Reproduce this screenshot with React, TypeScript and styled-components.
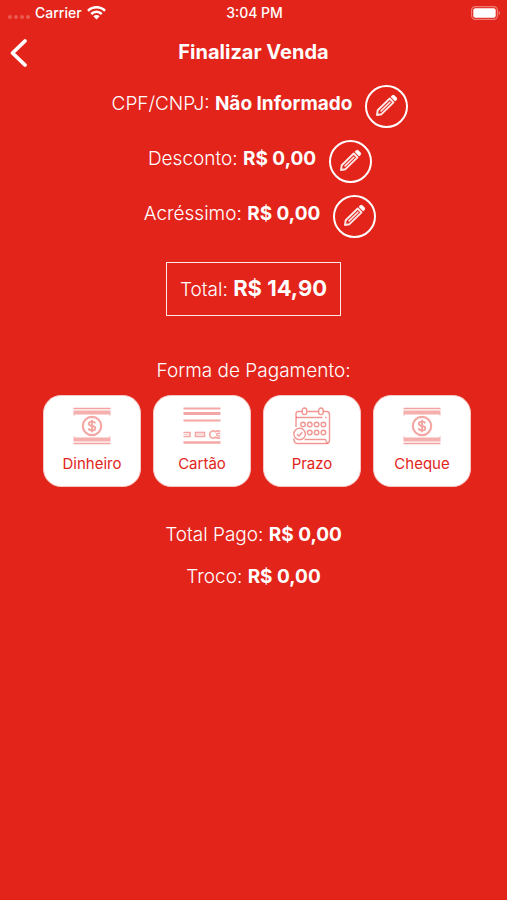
import React from "react";
import styled, { createGlobalStyle } from "styled-components";

const RED = "#e3241b";

const GlobalStyle = createGlobalStyle`
  *, *::before, *::after { box-sizing: border-box; }
  html, body { margin: 0; background: ${RED}; }
  body { color: #fff; font-family: Inter, "Liberation Sans", sans-serif; }
  button { font: inherit; color: inherit; cursor: pointer; }
`;

const Screen = styled.div`
  display: flex;
  flex-direction: column;
  min-height: 100vh;
  background: ${RED};
`;

const StatusBar = styled.div`
  display: grid;
  grid-template-columns: 1fr auto 1fr;
  align-items: center;
  height: 26px;
  padding: 0 6px 0 8px;
  font-size: 14px;
  line-height: 16px;
  font-weight: 500;
`;

const StatusLeft = styled.div`
  display: flex;
  align-items: center;
  gap: 5px;
`;

const StatusRight = styled.div`
  display: flex;
  justify-content: flex-end;
`;

const SignalDots = styled.div`
  display: flex;
  gap: 2px;
  padding-top: 8px;
`;

const Dot = styled.span`
  width: 4px;
  height: 4px;
  border-radius: 50%;
  background: rgba(255, 255, 255, 0.25);
`;

const Header = styled.header`
  display: grid;
  grid-template-columns: 40px 1fr 40px;
  align-items: center;
  height: 52px;
`;

const BackButton = styled.button`
  display: flex;
  padding: 2px 8px 0;
  border: 0;
  background: none;
`;

const Title = styled.h1`
  margin: 0;
  font-size: 20px;
  line-height: 24px;
  font-weight: 700;
  text-align: center;
`;

const Content = styled.main`
  display: flex;
  flex-direction: column;
  align-items: center;
  padding-top: 7px;
`;

const Fields = styled.div`
  display: flex;
  flex-direction: column;
  align-items: center;
  gap: 12px;
  padding-left: 13px;
`;

const Field = styled.div`
  display: flex;
  align-items: flex-start;
  gap: 13px;
`;

const Line = styled.p<{ $tall?: boolean }>`
  margin: 0;
  font-size: 19px;
  line-height: ${(p) => (p.$tall ? "38px" : "24px")};
  font-weight: 300;
  white-space: nowrap;

  strong { font-weight: 700; }
`;

const EditButton = styled.button`
  display: flex;
  align-items: center;
  justify-content: center;
  width: 43px;
  height: 43px;
  padding: 0 0 2px;
  border: 2px solid #fff;
  border-radius: 50%;
  background: none;
`;

const TotalBox = styled.div`
  margin-top: 24px;
  padding: 11px 13px;
  border: 1px solid rgba(255, 255, 255, 0.9);
  font-size: 19px;
  line-height: 28px;
  font-weight: 300;

  strong { font-size: 22px; font-weight: 700; }
`;

const SectionTitle = styled.h2`
  margin: 43px 0 12px;
  font-size: 19px;
  line-height: 24px;
  font-weight: 300;
`;

const Methods = styled.div`
  display: flex;
  flex-wrap: wrap;
  justify-content: center;
  gap: 12px;
  padding-left: 7px;
`;

const MethodButton = styled.button`
  display: flex;
  flex-direction: column;
  align-items: center;
  gap: 9px;
  width: 98px;
  height: 92px;
  padding: 11px 0 0;
  border: 1px solid #f6c8c5;
  border-radius: 18px;
  background: #fff;
  color: ${RED};
  font-size: 15px;
  line-height: 20px;
`;

const Summary = styled.div`
  display: flex;
  flex-direction: column;
  align-items: center;
  gap: 18px;
  margin-top: 36px;
`;

const WifiIcon = () => (
  <svg width="19" height="14" viewBox="0 0 19 14" fill="none" stroke="#fff" strokeWidth="2.5" aria-hidden="true">
    <path d="M1 4.8C5.6 0 13.4 0 18 4.8" />
    <path d="M4.2 8C7.2 5 11.8 5 14.8 8" />
    <path d="M6.4 10.3C8 8.7 11 8.7 12.6 10.3L9.5 13.5Z" fill="#fff" stroke="none" />
  </svg>
);

const BatteryIcon = () => (
  <svg width="30" height="14" viewBox="0 0 30 14" aria-hidden="true">
    <rect x="0.6" y="0.6" width="25.8" height="12.8" rx="3.6" fill="none" stroke="#fff" strokeOpacity="0.4" strokeWidth="1.2" />
    <rect x="2.3" y="2.3" width="22.4" height="9.4" rx="2" fill="#fff" />
    <path d="M27.7 4.8C29.6 5.6 29.6 8.4 27.7 9.2Z" fill="#fff" fillOpacity="0.4" />
  </svg>
);

const BackIcon = () => (
  <svg width="20" height="30" viewBox="0 0 20 30" fill="none" stroke="#fff" strokeWidth="3.8" strokeLinecap="round" strokeLinejoin="round" aria-hidden="true">
    <path d="M17 3L4.5 15L17 27" />
  </svg>
);

const PencilIcon = () => (
  <svg width="23" height="23" viewBox="0 0 23 23" fill="none" stroke="#fff" strokeOpacity="0.9" strokeLinejoin="round" aria-hidden="true">
    <path d="M2 21L2.7 16.3L14.7 4.5L18.5 8.3L6.5 20.2Z" strokeWidth="1.9" />
    <path d="M5.6 17.4L15.4 7.7" strokeWidth="1.5" />
    <path d="M16.5 2.8L17.6 1.8Q18.4 1.2 19.2 2L21.2 4Q21.8 4.8 21.2 5.6L20.2 6.5Z" fill="#fff" strokeWidth="1.4" />
  </svg>
);

const artProps = {
  width: 38,
  height: 38,
  viewBox: "0 0 38 38",
  fill: "none",
  stroke: RED,
  "aria-hidden": true,
} as const;

const CashIcon = () => (
  <svg {...artProps}>
    <path d="M0.5 1.5H37.5M0.5 36.5H37.5" strokeWidth="1.7" strokeOpacity="0.42" />
    <path d="M0.5 5.5H37.5M0.5 32.5H37.5" strokeWidth="3.8" strokeOpacity="0.36" />
    <path d="M1 7.4V8.6M37 7.4V8.6M1 29.4V30.6M37 29.4V30.6" strokeOpacity="0.36" />
    <circle cx="19" cy="19" r="9.2" strokeWidth="2.2" strokeOpacity="0.4" />
    <path d="M22.3 16.4Q21.6 14.6 19 14.6Q15.8 14.6 15.8 16.8Q15.8 18.5 19 19Q22.4 19.5 22.4 21.3Q22.4 23.5 19 23.5Q16.2 23.5 15.5 21.4M19 12.8V25.2" strokeWidth="1.8" strokeOpacity="0.42" />
  </svg>
);

const CardIcon = () => (
  <svg {...artProps}>
    <g strokeOpacity="0.4">
      <path d="M0.5 1.5H37.5M0.5 13.5H37.5" strokeWidth="2" />
      <path d="M0.5 6.5H37.5" strokeWidth="3.2" />
      <path d="M0.5 35.5H37.5" strokeWidth="2.4" />
      <path d="M0.5 25.5H7V29.5H0.5" strokeWidth="1.6" />
      <rect x="12.5" y="25.5" width="9" height="4" strokeWidth="1.6" />
      <path d="M14 27.5H20M0.5 27.5H5.5" strokeWidth="1" strokeOpacity="0.2" />
      <path d="M37.2 24.2Q34.4 23.4 32.6 24.8Q30.5 23.4 28.6 24.2Q26.6 25.2 26.6 27.5Q26.6 29.8 28.6 30.8Q30.7 31.5 32.6 30.2Q34.5 31.6 37.2 30.8" strokeWidth="1.7" />
      <path d="M37.2 26.4Q34.4 25.6 33.4 27.5Q34.4 29.4 37.2 28.8" strokeWidth="1.5" />
    </g>
  </svg>
);

const CalendarIcon = () => (
  <svg {...artProps}>
    <g strokeOpacity="0.48" strokeWidth="1.4">
      <path d="M8.8 4.5H5.5Q3 4.5 3 7V20M14.5 4.5H25M30.5 4.5H33.5Q36.5 4.5 36.5 7.5V33Q36.5 36.5 33.5 36.5H4Q1.5 36.5 1 33.5V31.5" />
      <path d="M3 10.5H29.5M32 10.5H33.5M11.5 32.5H32.5Q33 35.5 35 36.3" />
      <rect x="9.2" y="1" width="4.6" height="6.6" rx="2.3" />
      <rect x="25.6" y="1" width="4.6" height="6.6" rx="2.3" />
      {[10, 16.8, 23.6, 30.4].map((x) => (
        <circle key={x} cx={x} cy="17.5" r="2.3" />
      ))}
      {[16.8, 23.6, 30.4].map((x) => (
        <circle key={x} cx={x} cy="25.5" r="2.3" />
      ))}
      <circle cx="6.6" cy="27" r="5.8" />
      <path d="M4 27.2L6 29L9.4 25.2" />
    </g>
  </svg>
);

const fields = [
  { label: "CPF/CNPJ:", value: "Não Informado" },
  { label: "Desconto:", value: "R$ 0,00" },
  { label: "Acréssimo:", value: "R$ 0,00" },
];

const methods = [
  { name: "Dinheiro", Icon: CashIcon },
  { name: "Cartão", Icon: CardIcon },
  { name: "Prazo", Icon: CalendarIcon },
  { name: "Cheque", Icon: CashIcon },
];

export default function App() {
  return (
    <Screen>
      <GlobalStyle />
      <StatusBar>
        <StatusLeft>
          <SignalDots>
            <Dot />
            <Dot />
            <Dot />
            <Dot />
          </SignalDots>
          <span>Carrier</span>
          <WifiIcon />
        </StatusLeft>
        <span>3:04 PM</span>
        <StatusRight>
          <BatteryIcon />
        </StatusRight>
      </StatusBar>
      <Header>
        <BackButton type="button" aria-label="Voltar">
          <BackIcon />
        </BackButton>
        <Title>Finalizar Venda</Title>
      </Header>
      <Content>
        <Fields>
          {fields.map(({ label, value }) => (
            <Field key={label}>
              <Line $tall>
                {label} <strong>{value}</strong>
              </Line>
              <EditButton type="button" aria-label={`Editar ${label.replace(":", "")}`}>
                <PencilIcon />
              </EditButton>
            </Field>
          ))}
        </Fields>
        <TotalBox>
          Total: <strong>R$ 14,90</strong>
        </TotalBox>
        <SectionTitle>Forma de Pagamento:</SectionTitle>
        <Methods>
          {methods.map(({ name, Icon }) => (
            <MethodButton key={name} type="button">
              <Icon />
              {name}
            </MethodButton>
          ))}
        </Methods>
        <Summary>
          <Line>
            Total Pago: <strong>R$ 0,00</strong>
          </Line>
          <Line>
            Troco: <strong>R$ 0,00</strong>
          </Line>
        </Summary>
      </Content>
    </Screen>
  );
}
